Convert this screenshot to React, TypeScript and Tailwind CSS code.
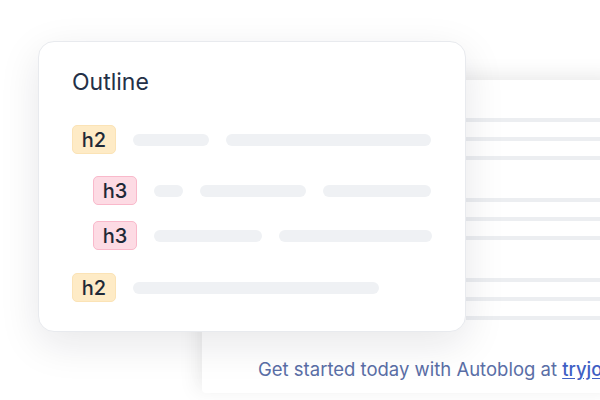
const rows = [
  { tag: "h2", indent: false, bars: [76, 205] },
  { tag: "h3", indent: true, bars: [29, 106, 108] },
  { tag: "h3", indent: true, bars: [108, 153] },
  { tag: "h2", indent: false, bars: [246] },
];

function Tag({ tag }: { tag: string }) {
  const isH2 = tag === "h2";
  return (
    <span
      className={`flex h-[29px] w-[44px] shrink-0 items-center justify-center rounded-[5px] border text-[20px] font-medium text-[#1f2937] ${
        isH2 ? "border-[#fbe3b6] bg-[#feebc6]" : "border-[#f9b9cb] bg-[#fddbe4]"
      }`}
    >
      {tag}
    </span>
  );
}

export default function App() {
  return (
    <div className="relative h-[400px] w-[600px] overflow-hidden bg-white font-['Inter',sans-serif]">
      {/* document behind */}
      <div className="ml-[202px] mt-[80px] flex h-[313px] w-[420px] flex-col rounded-l-sm bg-white pl-[264px] pt-[38px] shadow-[-8px_0_18px_rgba(0,0,0,0.05),0_-10px_18px_rgba(0,0,0,0.04)]">
        {[0, 1, 2].map((g) => (
          <div key={g} className="mb-[38px] flex flex-col gap-[15px]">
            <div className="h-[4px] bg-[#eceef1]" />
            <div className="h-[4px] bg-[#eceef1]" />
            <div className="h-[4px] bg-[#eceef1]" />
          </div>
        ))}
      </div>
      <p className="absolute left-[258px] top-[356px] whitespace-nowrap text-[18.5px] text-[#5a6ea6]">
        Get started today with Autoblog at{" "}
        <span className="font-medium text-[#3f5fc4] underline underline-offset-2">tryjotbot.com</span>
      </p>

      {/* outline card */}
      <div className="absolute left-[38px] top-[41px] h-[291px] w-[428px] rounded-2xl border border-[#e8eaee] bg-white px-[33px] pt-[25px] shadow-[0_12px_40px_rgba(15,23,42,0.10)]">
        <h2 className="text-[23px] font-normal leading-[30px] text-[#243047]">Outline</h2>
        <div className="mt-[28px] flex flex-col">
          {rows.map((r, i) => (
            <div
              key={i}
              className={`flex items-center gap-[17px] ${r.indent ? "pl-[21px]" : ""} ${
                i === 1 ? "mt-[22px]" : i === 2 ? "mt-[16px]" : i === 3 ? "mt-[23px]" : ""
              }`}
            >
              <Tag tag={r.tag} />
              <div className="flex gap-[17px]">
                {r.bars.map((w, j) => (
                  <div key={j} className="h-[12px] rounded-full bg-[#eff1f4]" style={{ width: w }} />
                ))}
              </div>
            </div>
          ))}
        </div>
      </div>
    </div>
  );
}
